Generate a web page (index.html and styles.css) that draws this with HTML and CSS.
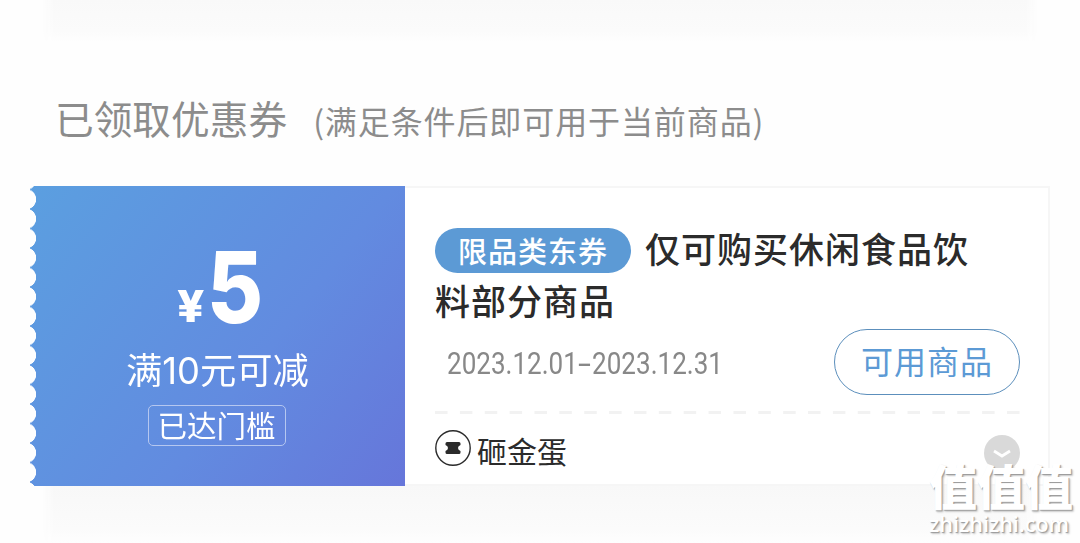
FILE: index.html
```html
<!DOCTYPE html>
<html lang="zh-CN">
<head>
<meta charset="utf-8">
<title>已领取优惠券</title>
<link rel="stylesheet" href="styles.css">
</head>
<body>
<main class="page">
  <div class="shade shade-top"></div>
  <header class="heading">
    <h1 class="heading-title">已领取优惠券</h1>
    <span class="heading-note">(满足条件后即可用于当前商品)</span>
  </header>
  <section class="coupon">
    <div class="value">
      <div class="price"><span class="currency">¥</span><span class="amount">5</span></div>
      <div class="condition">满10元可减</div>
      <div class="reached">已达门槛</div>
    </div>
    <div class="detail">
      <h2 class="name"><span class="tag">限品类东券</span>仅可购买休闲食品饮料部分商品</h2>
      <div class="row">
        <span class="date">2023.12.01<span class="dash">-</span>2023.12.31</span>
        <button class="goods">可用商品</button>
      </div>
      <svg class="divider" width="585" height="3" viewBox="0 0 585 3"><path d="M0 1.5H585" stroke="#f2f2f2" stroke-width="3" stroke-dasharray="12.5 12.37"/></svg>
      <div class="source">
        <svg class="source-icon" width="36" height="36" viewBox="0 0 36 36"><circle cx="18" cy="18" r="17.2" fill="none" stroke="#2b2b2b" stroke-width="1.4"/><path d="M12 12H24Q25.500 12 25.500 13.500V15Q23 16 23 18T25.500 21V22.500Q25.500 24 24 24H12Q10.500 24 10.500 22.500V21Q13 20 13 18T10.500 15V13.500Q10.500 12 12 12Z" fill="#2b2b2b"/></svg>
        <span class="source-name">砸金蛋</span>
        <svg class="expand" width="36" height="36" viewBox="0 0 36 36"><circle cx="18" cy="18" r="18" fill="#d9d9d9"/><path d="M10 16L18 21L26 16" fill="none" stroke="#fff" stroke-width="2.800"/></svg>
      </div>
    </div>
  </section>
  <div class="shade shade-bottom"></div>
  <div class="watermark"><span class="mark-name">值值值</span><span class="mark-site">zhizhizhi.com</span></div>
</main>
</body>
</html>
```
FILE: styles.css
```css
* { box-sizing: border-box; }
body { margin: 0; background: #fefefe; font-family: "Noto Sans CJK SC", sans-serif; }
.page { position: relative; width: 1080px; height: 543px; overflow: hidden; display: flex; flex-direction: column; }
.shade { flex: none; margin: 0 42px; -webkit-mask-image: linear-gradient(90deg, transparent, #000 12px, #000 calc(100% - 12px), transparent); mask-image: linear-gradient(90deg, transparent, #000 12px, #000 calc(100% - 12px), transparent); }
.shade-top { height: 42px; background: linear-gradient(#f9f9f9, #fbfbfb 75%, #fefefe); }
.shade-bottom { height: 57px; background: linear-gradient(#f8f8f8, #fbfbfb 75%, #fefefe); }
.heading { height: 144px; padding: 45px 0 0 55px; display: flex; align-items: baseline; color: #8c8c8c; white-space: nowrap; line-height: 60px; }
.heading-title { margin: 0; font-size: 38.7px; font-weight: 400; }
.heading-note { margin-left: 26px; font-size: 32px; letter-spacing: .9px; }
.coupon { flex: none; height: 300px; margin: 0 30px; display: flex; }
.value { width: 375px; padding-top: 50px; display: flex; flex-direction: column; align-items: center; color: #fff; background: linear-gradient(128deg, #5b9fe0, #628be0 60%, #6676da);
  -webkit-mask: radial-gradient(circle 10.2px at -4px 9.75px, transparent 9.8px, #000 10.4px) 0 3.5px / 100% 19.5px; mask: radial-gradient(circle 10.2px at -4px 9.75px, transparent 9.8px, #000 10.4px) 0 3.5px / 100% 19.5px; }
.price { height: 105px; padding-left: 10px; display: flex; align-items: baseline; font-family: Inter, sans-serif; font-weight: 800; line-height: 105px; }
.currency { width: 31px; font-size: 44px; transform: translate(-3px, -2px) scaleX(1.08); transform-origin: left; }
.amount { width: 55px; font-size: 99px; transform: translate(-4px, -1px) scaleX(.87); transform-origin: left; }
.condition { height: 60px; font-family: Inter, "Noto Sans CJK SC", sans-serif; font-size: 36.3px; line-height: 60px; }
.reached { width: 138px; height: 41px; margin: 4px 2px 0 0; border: 1px solid #b5c7f0; border-radius: 5px; font-size: 29.5px; line-height: 37px; text-align: center; }
.detail { flex: 1; padding: 34px 28px 0 30px; border: 2px solid #f6f6f6; border-left: 0; background: #fff; }
.name { width: 550px; margin: 0; color: #2b2b2b; font-size: 35px; font-weight: 500; letter-spacing: 1px; line-height: 52px; }
.tag { display: inline-block; width: 196px; height: 45px; margin-right: 14px; border-radius: 23px; background: #5c9ad5; color: #fff; font-size: 29px; line-height: 45px; text-align: center; vertical-align: 0; }
.row { height: 66px; margin-top: 3px; display: flex; align-items: center; justify-content: space-between; padding-left: 12px; }
.date { padding-top: 2px; color: #888; font-family: Roboto, sans-serif; font-size: 31px; transform: scaleX(.84); transform-origin: left; }
.dash { display: inline-block; width: 17px; transform: scaleX(1.8); transform-origin: left; }
.goods { width: 186px; height: 66px; padding: 0 0 4px; border: 1px solid #5c8fbc; border-radius: 33px; background: #fff; color: #5c9ad5; font: 32px "Noto Sans CJK SC", sans-serif; letter-spacing: 1px; }
.divider { display: block; margin-top: 16px; }
.source { display: flex; align-items: center; margin-top: 15px; height: 38px; }
.source-name { margin: 4px 0 0 6px; color: #2b2b2b; font-size: 30px; line-height: 38px; }
.expand { margin: 9px 0 0 auto; }
.watermark { position: absolute; left: 929px; top: 457px; width: 146px; color: #fff; text-shadow: 1px 1px 1px #999, 2px 2px 2px #ccc; }
.mark-name { display: block; font-size: 48px; font-weight: 900; line-height: 54px; }
.mark-site { display: block; font: 600 21.5px/26px "Open Sans", sans-serif; }
```
